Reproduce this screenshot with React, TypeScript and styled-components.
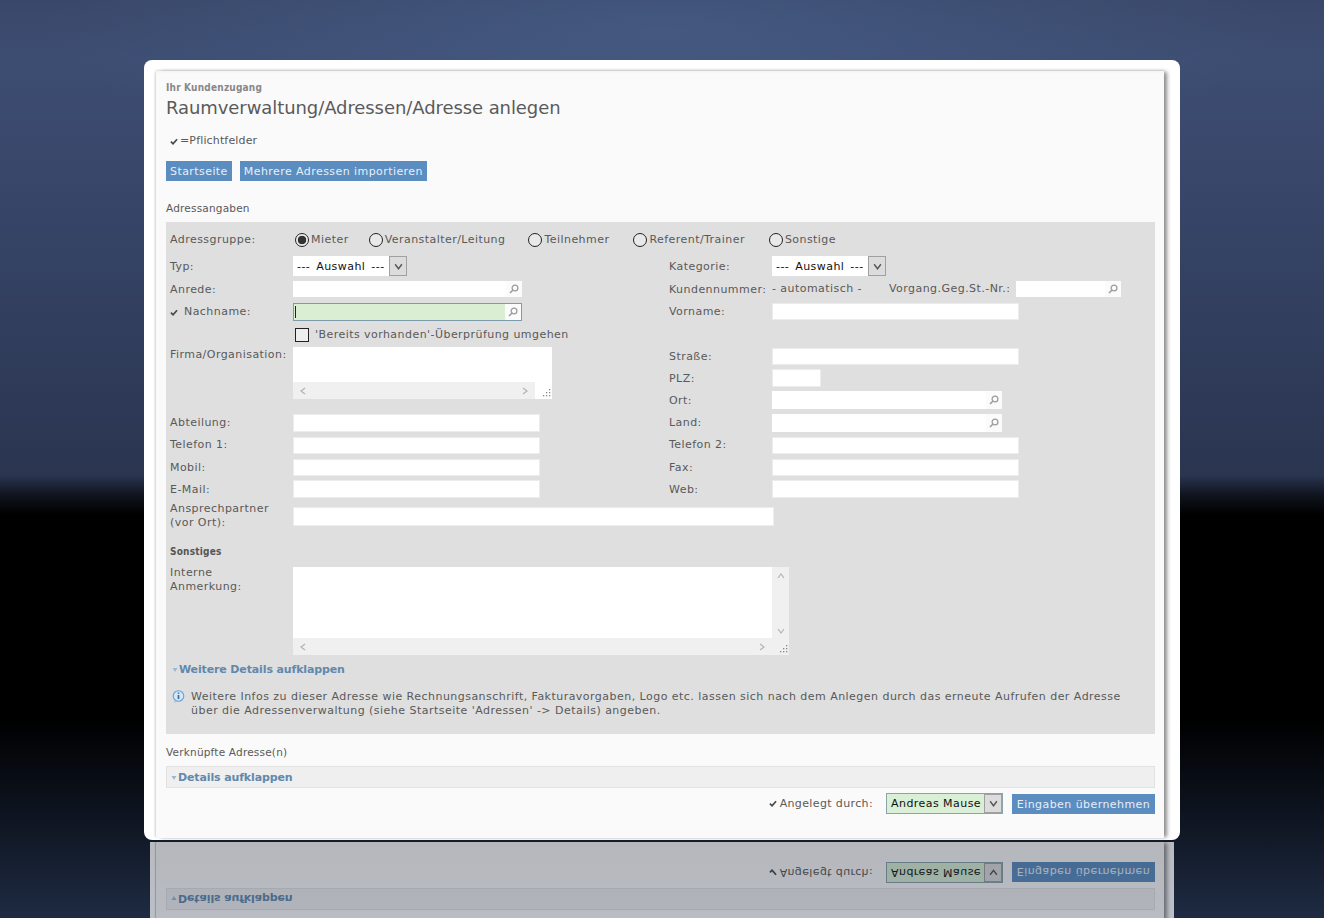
import React from "react";
import styled, { createGlobalStyle } from "styled-components";

const Global = createGlobalStyle`
  html, body { margin: 0; padding: 0; height: 918px; overflow: hidden; background: #000; }
  body { font-family: "DejaVu Sans", Verdana, sans-serif; font-size: 11px; letter-spacing: 0.45px; color: #595959; }
  * { box-sizing: border-box; }
`;

const Page = styled.div`
  height: 918px;
  overflow: hidden;
  background:
    radial-gradient(ellipse 620px 130px at 50% 30px, rgba(80, 105, 150, 0.45), rgba(80, 105, 150, 0) 100%),
    linear-gradient(180deg, #39486a 0, #3d4d72 60px, #354365 240px, #2a3550 475px, #10141e 495px, #000 515px, #000 720px, #0a0f18 790px, #1e2b42 918px);
`;

const Frame = styled.div`
  width: 1036px;
  height: 780px;
  margin: 60px auto 0;
  padding: 11px 16px 2px 12px;
  background: #fff;
  border-radius: 8px;
`;

const Card = styled.div`
  height: 100%;
  padding: 0 9px 0 10px;
  background: linear-gradient(180deg, #f4f4f4 0, #fafafa 3px);
  box-shadow: -2px 0 2px -1px #d4d4d4, 4px 0 4px -1px #8c8c8c, 0 -1px 2px #e0e0e0;
`;

const Kicker = styled.div`
  padding-top: 10px;
  font: bold 10px/14px "DejaVu Sans Condensed", "DejaVu Sans", sans-serif;
  letter-spacing: 0.2px;
  color: #888;
`;

const Title = styled.h1`
  margin: 1px 0 0;
  font: 400 18px/24px "DejaVu Sans", sans-serif;
  letter-spacing: -0.08px;
  color: #5a5a5a;
`;

const Required = styled.div`
  margin-top: 13px;
  padding-left: 4px;
  display: flex;
  align-items: center;
  gap: 2px;
  line-height: 16px;
  letter-spacing: 0.15px;
`;

const ButtonRow = styled.div`
  margin-top: 12px;
  display: flex;
  gap: 8px;
`;

const Btn = styled.button`
  height: 20px;
  padding: 0 4px;
  border: 0;
  background: #5b8dc0;
  color: #e6eff8;
  font: 11px/21px "DejaVu Sans", sans-serif;
  letter-spacing: 0.43px;
`;

const SectionLabel = styled.div<{ $mt: number }>`
  margin-top: ${(p) => p.$mt}px;
  line-height: 14px;
  font-size: 10.5px;
  letter-spacing: 0.2px;
  color: #595959;
`;

const Panel = styled.div`
  margin-top: 7px;
  padding: 0 0 16px 4px;
  background: #dfdfdf;
`;

const Row = styled.div<{ $h: number; $lh?: number }>`
  display: grid;
  grid-template-columns: 123px 376px 103px 1fr;
  height: ${(p) => p.$h}px;
  line-height: ${(p) => p.$lh ?? 17}px;
  align-items: start;
`;

const SubColumn = styled.div`
  grid-column: 3 / span 2;
`;

const SubRow = styled.div<{ $h: number; $pt?: number; $lh?: number }>`
  display: grid;
  grid-template-columns: 103px 1fr;
  height: ${(p) => p.$h}px;
  padding-top: ${(p) => p.$pt ?? 0}px;
  line-height: ${(p) => p.$lh ?? 19}px;
  align-items: start;
`;

const Label = styled.div`
  color: #595959;
  white-space: nowrap;
  display: flex;
  align-items: center;
`;

const NachnameText = styled.span`
  margin-left: 6px;
`;

const TwoLine = styled.div<{ $mt: number }>`
  color: #595959;
  line-height: 14px;
  margin-top: ${(p) => p.$mt}px;
`;

const RadioRow = styled.div`
  display: grid;
  grid-template-columns: 123px 1fr;
  height: 34px;
  align-items: center;
`;

const Radios = styled.div`
  display: flex;
  padding-left: 2px;
`;

const RadioItem = styled.div<{ $mr?: number }>`
  display: flex;
  align-items: center;
  gap: 2px;
  margin-right: ${(p) => p.$mr ?? 0}px;
`;

const RadioDot = styled.span<{ $on?: boolean }>`
  width: 14px;
  height: 14px;
  border: 1px solid #222;
  border-radius: 50%;
  background: ${(p) => (p.$on ? "radial-gradient(circle, #333 0 4px, #eee 4.6px)" : "#e9e9e9")};
  margin-top: 1px;
`;

const SelectBox = styled.div<{ $green?: boolean }>`
  display: inline-flex;
  height: ${(p) => (p.$green ? 21 : 20)}px;
  width: ${(p) => (p.$green ? 117 : 114)}px;
  background: ${(p) => (p.$green ? "#d9efd6" : "#fff")};
  color: #111;
  line-height: ${(p) => (p.$green ? 20 : 21)}px;
  word-spacing: ${(p) => (p.$green ? 0 : 2)}px;
  ${(p) => (p.$green ? "border: 1px solid #8ba3aa;" : "")}
`;

const SelectText = styled.span`
  flex: 1;
  padding-left: 4px;
  white-space: nowrap;
`;

const SelectArrow = styled.span`
  width: 18px;
  flex: none;
  display: flex;
  align-items: center;
  justify-content: center;
  background: #dcdcdc;
  border: 1px solid #a0a0a0;
`;

const TextInput = styled.input<{ $w: number; $h?: number }>`
  display: block;
  width: ${(p) => p.$w}px;
  height: ${(p) => p.$h ?? 17}px;
  padding: 0;
  border: 0;
  background: #fff;
  box-shadow: 0 0 0 1px #ececec inset;
`;

const WideInput = styled(TextInput)`
  grid-column: 2 / span 3;
`;

const SearchBox = styled.div<{ $w: number; $green?: boolean; $h?: number }>`
  position: relative;
  display: flex;
  width: ${(p) => p.$w}px;
  height: ${(p) => p.$h ?? 16}px;
  background: ${(p) => (p.$green ? "#d9eed3" : "#fff")};
  ${(p) => (p.$green ? "border: 1px solid #7d9cab;" : "")}
`;

const SearchCell = styled.span`
  margin-left: auto;
  width: 16px;
  display: flex;
  align-items: center;
  justify-content: center;
  background: #fbfbfb;
`;

const Caret = styled.span`
  position: absolute;
  left: 1px;
  top: 2px;
  bottom: 2px;
  width: 1px;
  background: #222;
`;

const CheckRow = styled.div`
  grid-column: 2 / span 3;
  display: flex;
  align-items: center;
  gap: 6px;
  padding-left: 2px;
  height: 14px;
`;

const CheckText = styled.span`
  padding-bottom: 2px;
`;

const CheckSquare = styled.span`
  width: 14px;
  height: 14px;
  border: 1px solid #222;
  background: #eee;
`;

const AutoCell = styled.div`
  display: flex;
  align-items: center;
  line-height: 16px;
`;

const AutoText = styled.span`
  width: 117px;
  white-space: nowrap;
`;

const VorgangLabel = styled.span`
  width: 127px;
  white-space: nowrap;
`;

const Area = styled.div<{ $w: number; $h: number }>`
  display: grid;
  grid-template-columns: 1fr 17px;
  grid-template-rows: 1fr 17px;
  width: ${(p) => p.$w}px;
  height: ${(p) => p.$h}px;
  background: #f0f0f0;
`;

const AreaField = styled.textarea<{ $full?: boolean }>`
  ${(p) => (p.$full ? "grid-column: 1 / span 2;" : "")}
  display: block;
  width: 100%;
  height: 100%;
  padding: 0;
  border: 0;
  resize: none;
  outline: none;
  background: #fff;
`;

const VBar = styled.div`
  display: flex;
  flex-direction: column;
  align-items: center;
  justify-content: space-between;
  padding: 5px 0 3px;
`;

const HBar = styled.div`
  display: flex;
  align-items: center;
  justify-content: space-between;
  padding: 0 6px;
`;

const Corner = styled.div<{ $white?: boolean }>`
  display: flex;
  align-items: flex-end;
  justify-content: flex-end;
  padding: 0 1px 2px 0;
  background: ${(p) => (p.$white ? "#fff" : "transparent")};
`;

const Bold = styled.div`
  height: 23px;
  padding-top: 1px;
  font: bold 10px/14px "DejaVu Sans Condensed", "DejaVu Sans", sans-serif;
  letter-spacing: 0.2px;
  color: #555;
`;

const DetailLink = styled.div<{ $mt?: number }>`
  margin-top: ${(p) => p.$mt ?? 0}px;
  display: flex;
  align-items: center;
  gap: 1px;
  padding-left: 2px;
  font: bold 11px/16px "DejaVu Sans", sans-serif;
  letter-spacing: -0.13px;
  color: #6188ad;
`;

const InfoRow = styled.div`
  margin-top: 12px;
  display: flex;
  gap: 6px;
  padding-left: 2px;
`;

const InfoText = styled.div`
  flex: 1;
  font-size: 11px;
  line-height: 14px;
  letter-spacing: 0.47px;
  white-space: nowrap;
  color: #595959;
`;

const DetailsBar = styled.div`
  margin-top: 7px;
  height: 22px;
  padding: 1px 0 0 2px;
  display: flex;
  align-items: center;
  background: #efefef;
  border: 1px solid #e2e2e2;
`;

const FooterRow = styled.div`
  margin-top: 5px;
  display: flex;
  align-items: center;
  justify-content: flex-end;
  height: 21px;
`;

const FooterLabel = styled.div`
  display: flex;
  align-items: center;
  gap: 3px;
  margin-right: 13px;
  letter-spacing: 0.37px;
  color: #595959;
`;

const SubmitBtn = styled(Btn)`
  margin-left: 9px;
  width: 143px;
  padding: 0;
`;

const Reflection = styled.div`
  width: 1024px;
  height: 76px;
  margin: 2px auto 0;
  overflow: hidden;
  opacity: 0.7;
  transform: scaleY(-1);
  display: flex;
  flex-direction: column;
  justify-content: flex-end;
  background: #fff;
  padding: 0 10px 0 6px;
`;

const ReflectedCard = styled.div`
  flex: none;
  height: 120px;
  display: flex;
  flex-direction: column;
  justify-content: flex-end;
  padding: 0 9px 20px 10px;
  background: #fafafa;
  box-shadow: -1px 0 1px #ccc, 4px 0 4px -1px #8c8c8c;
`;

const Check = () => (
  <svg width="8" height="7" viewBox="0 0 9 8" style={{ flex: "none" }}>
    <path d="M1 4.2 3.4 6.6 8 1.4" fill="none" stroke="#4a4a4a" strokeWidth="2" />
  </svg>
);

const Lens = () => (
  <svg width="10" height="10" viewBox="0 0 10 10">
    <circle cx="6" cy="4" r="2.9" fill="none" stroke="#9c9c9c" strokeWidth="1.3" />
    <path d="M3.8 6.2 1 9" stroke="#9c9c9c" strokeWidth="1.6" />
  </svg>
);

const Chev = ({ dir, color = "#b4b4b4", size = 8 }: { dir: "up" | "down" | "left" | "right"; color?: string; size?: number }) => {
  const d = { up: "M1 6 4 2 7 6", down: "M1 2 4 6 7 2", left: "M6 1 2 4 6 7", right: "M2 1 6 4 2 7" }[dir];
  return (
    <svg width={size} height={size} viewBox="0 0 8 8">
      <path d={d} fill="none" stroke={color} strokeWidth="1.2" />
    </svg>
  );
};

const Grip = () => (
  <svg width="9" height="9" viewBox="0 0 9 9">
    {[[7, 1], [4, 4], [7, 4], [1, 7], [4, 7], [7, 7]].map(([x, y]) => (
      <rect key={`${x}-${y}`} x={x} y={y} width="1.3" height="1.3" fill="#888" />
    ))}
  </svg>
);

const Twisty = () => (
  <svg width="6" height="6" viewBox="0 0 6 6">
    <path d="M0.5 1 3 5 5.500 1Z" fill="#9ab8d2" />
  </svg>
);

const InfoIcon = () => (
  <svg width="13" height="14" viewBox="0 0 13 14" style={{ flex: "none" }}>
    <circle cx="6.500" cy="6" r="5.300" fill="#d5e6f6" stroke="#6f9fce" strokeWidth="1.100" />
    <path d="M6.500 2.500v1.200M6.500 5v4" stroke="#2f6db0" strokeWidth="1.700" />
    <path d="M3 10.500 2 13 5.500 11" fill="#9fc0e0" />
  </svg>
);

const Search = ({ w, green, h, caret }: { w: number; green?: boolean; h?: number; caret?: boolean }) => (
  <SearchBox $w={w} $green={green} $h={h}>
    {caret && <Caret />}
    <SearchCell>
      <Lens />
    </SearchCell>
  </SearchBox>
);

const Select = ({ text }: { text: string }) => (
  <SelectBox>
    <SelectText>{text}</SelectText>
    <SelectArrow>
      <Chev dir="down" color="#555" size={9} />
    </SelectArrow>
  </SelectBox>
);

const BottomPart = () => (
  <>
    <SectionLabel $mt={11}>Verknüpfte Adresse(n)</SectionLabel>
    <DetailsBar>
      <DetailLink>
        <Twisty />
        Details aufklappen
      </DetailLink>
    </DetailsBar>
    <FooterRow>
      <FooterLabel>
        <Check />
        Angelegt durch:
      </FooterLabel>
      <SelectBox $green>
        <SelectText>Andreas Mause</SelectText>
        <SelectArrow>
          <Chev dir="down" color="#555" size={9} />
        </SelectArrow>
      </SelectBox>
      <SubmitBtn>Eingaben übernehmen</SubmitBtn>
    </FooterRow>
  </>
);

export default function App() {
  return (
    <Page>
      <Global />
      <Frame>
        <Card>
          <Kicker>Ihr Kundenzugang</Kicker>
          <Title>Raumverwaltung/Adressen/Adresse anlegen</Title>
          <Required>
            <Check />
            =Pflichtfelder
          </Required>
          <ButtonRow>
            <Btn>Startseite</Btn>
            <Btn>Mehrere Adressen importieren</Btn>
          </ButtonRow>
          <SectionLabel $mt={20}>Adressangaben</SectionLabel>
          <Panel>
            <RadioRow>
              <Label>Adressgruppe:</Label>
              <Radios>
                <RadioItem $mr={20}><RadioDot $on />Mieter</RadioItem>
                <RadioItem $mr={23}><RadioDot />Veranstalter/Leitung</RadioItem>
                <RadioItem $mr={24}><RadioDot />Teilnehmer</RadioItem>
                <RadioItem $mr={24}><RadioDot />Referent/Trainer</RadioItem>
                <RadioItem><RadioDot />Sonstige</RadioItem>
              </Radios>
            </RadioRow>
            <Row $h={25} $lh={21}>
              <Label>Typ:</Label>
              <div><Select text="--- Auswahl ---" /></div>
              <Label>Kategorie:</Label>
              <div><Select text="--- Auswahl ---" /></div>
            </Row>
            <Row $h={22} $lh={17}>
              <Label>Anrede:</Label>
              <Search w={229} />
              <Label>Kundennummer:</Label>
              <AutoCell>
                <AutoText>- automatisch -</AutoText>
                <VorgangLabel>Vorgang.Geg.St.-Nr.:</VorgangLabel>
                <Search w={105} />
              </AutoCell>
            </Row>
            <Row $h={25} $lh={18}>
              <Label>
                <Check />
                <NachnameText>Nachname:</NachnameText>
              </Label>
              <Search w={229} h={18} green caret />
              <Label>Vorname:</Label>
              <TextInput $w={247} />
            </Row>
            <Row $h={19}>
              <CheckRow>
                <CheckSquare />
                <CheckText>'Bereits vorhanden'-Überprüfung umgehen</CheckText>
              </CheckRow>
            </Row>
            <Row $h={67} $lh={15}>
              <Label>Firma/Organisation:</Label>
              <Area $w={259} $h={52}>
                <AreaField $full />
                <HBar>
                  <Chev dir="left" />
                  <Chev dir="right" />
                </HBar>
                <Corner $white>
                  <Grip />
                </Corner>
              </Area>
              <SubColumn>
                <SubRow $h={22} $pt={1} $lh={17}>
                  <Label>Straße:</Label>
                  <TextInput $w={247} />
                </SubRow>
                <SubRow $h={22}>
                  <Label>PLZ:</Label>
                  <TextInput $w={49} $h={18} />
                </SubRow>
                <SubRow $h={23}>
                  <Label>Ort:</Label>
                  <Search w={230} h={18} />
                </SubRow>
              </SubColumn>
            </Row>
            <Row $h={23} $lh={17}>
              <Label>Abteilung:</Label>
              <TextInput $w={247} $h={18} />
              <Label>Land:</Label>
              <Search w={230} h={18} />
            </Row>
            <Row $h={22} $lh={15}>
              <Label>Telefon 1:</Label>
              <TextInput $w={247} />
              <Label>Telefon 2:</Label>
              <TextInput $w={247} />
            </Row>
            <Row $h={21} $lh={17}>
              <Label>Mobil:</Label>
              <TextInput $w={247} />
              <Label>Fax:</Label>
              <TextInput $w={247} />
            </Row>
            <Row $h={27} $lh={19}>
              <Label>E-Mail:</Label>
              <TextInput $w={247} $h={18} />
              <Label>Web:</Label>
              <TextInput $w={247} $h={18} />
            </Row>
            <Row $h={37}>
              <TwoLine $mt={-5}>
                Ansprechpartner
                <br />
                (vor Ort):
              </TwoLine>
              <WideInput $w={481} $h={19} />
            </Row>
            <Bold>Sonstiges</Bold>
            <Row $h={88}>
              <TwoLine $mt={-1}>
                Interne
                <br />
                Anmerkung:
              </TwoLine>
              <Area $w={496} $h={88}>
                <AreaField />
                <VBar>
                  <Chev dir="up" />
                  <Chev dir="down" />
                </VBar>
                <HBar>
                  <Chev dir="left" />
                  <Chev dir="right" />
                </HBar>
                <Corner>
                  <Grip />
                </Corner>
              </Area>
            </Row>
            <DetailLink $mt={7}>
              <Twisty />
              Weitere Details aufklappen
            </DetailLink>
            <InfoRow>
              <InfoIcon />
              <InfoText>
                Weitere Infos zu dieser Adresse wie Rechnungsanschrift, Fakturavorgaben, Logo etc. lassen sich nach dem Anlegen durch das erneute Aufrufen der Adresse
                <br />
                über die Adressenverwaltung (siehe Startseite 'Adressen' -&gt; Details) angeben.
              </InfoText>
            </InfoRow>
          </Panel>
          <BottomPart />
        </Card>
      </Frame>
      <Reflection aria-hidden="true">
        <ReflectedCard>
          <BottomPart />
        </ReflectedCard>
      </Reflection>
    </Page>
  );
}
